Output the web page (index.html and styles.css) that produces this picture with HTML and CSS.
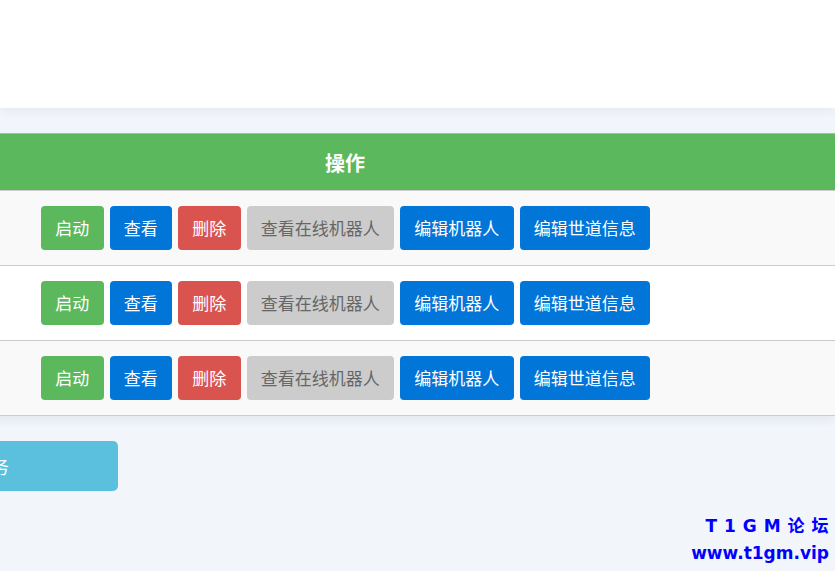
FILE: index.html
```html
<!DOCTYPE html>
<html lang="zh-CN">
<head>
<meta charset="utf-8">
<title>任务列表</title>
<link rel="stylesheet" href="styles.css">
</head>
<body>
<header class="topbar"></header>
<main class="main">
  <div class="table">
    <div class="thead">
      <div class="th th-lead"></div>
      <div class="th th-ops">操作</div>
      <div class="th"></div>
    </div>
    <div class="tr odd">
      <div class="td td-lead"></div>
      <div class="td td-ops">
        <button class="btn btn-green">启动</button>
        <button class="btn btn-blue">查看</button>
        <button class="btn btn-red">删除</button>
        <button class="btn btn-gray">查看在线机器人</button>
        <button class="btn btn-blue">编辑机器人</button>
        <button class="btn btn-blue">编辑世道信息</button>
      </div>
      <div class="td"></div>
    </div>
    <div class="tr even">
      <div class="td td-lead"></div>
      <div class="td td-ops">
        <button class="btn btn-green">启动</button>
        <button class="btn btn-blue">查看</button>
        <button class="btn btn-red">删除</button>
        <button class="btn btn-gray">查看在线机器人</button>
        <button class="btn btn-blue">编辑机器人</button>
        <button class="btn btn-blue">编辑世道信息</button>
      </div>
      <div class="td"></div>
    </div>
    <div class="tr odd">
      <div class="td td-lead"></div>
      <div class="td td-ops">
        <button class="btn btn-green">启动</button>
        <button class="btn btn-blue">查看</button>
        <button class="btn btn-red">删除</button>
        <button class="btn btn-gray">查看在线机器人</button>
        <button class="btn btn-blue">编辑机器人</button>
        <button class="btn btn-blue">编辑世道信息</button>
      </div>
      <div class="td"></div>
    </div>
  </div>
  <div class="actions">
    <button class="btn-add">添加任务</button>
  </div>
</main>
<div class="watermark">
  <div class="wm-line wm-title">T 1 G M 论 坛</div>
  <div class="wm-line">www.t1gm.vip</div>
</div>
</body>
</html>
```

FILE: styles.css
```css
html, body {
  margin: 0;
  padding: 0;
}
body {
  background: #f2f5fa;
  font-family: "Noto Sans CJK SC", "Noto Sans", sans-serif;
  width: 835px;
  height: 571px;
  overflow: hidden;
  position: relative;
}
.topbar {
  height: 108px;
  background: #ffffff;
  box-shadow: 0 2px 10px rgba(40, 60, 100, 0.07);
  position: relative;
  z-index: 1;
}
.main {
  padding-top: 25px;
}
.table {
  margin-left: -300px;
  width: 1135px;
  border-top: 1px solid #b4b4b4;
  box-shadow: 0 4px 10px rgba(40, 60, 100, 0.07);
}
.thead, .tr {
  display: grid;
  grid-template-columns: 329px 632px 1fr;
}
.thead {
  background: #5cb85c;
  height: 56px;
  border-bottom: 1px solid #cccccc;
}
.th {
  display: flex;
  align-items: center;
  justify-content: center;
  color: #ffffff;
  font-size: 20px;
  font-weight: 700;
}
.tr {
  border-bottom: 1px solid #cccccc;
}
.tr.odd { background: #f9f9f9; }
.tr.even { background: #ffffff; }
.td-ops {
  display: flex;
  gap: 6px;
  padding: 15px 12px;
}
.btn {
  height: 44px;
  padding: 0 14.25px;
  border: none;
  border-radius: 4px;
  font-family: "Noto Sans CJK SC", sans-serif;
  font-size: 17px;
  font-weight: 400;
  line-height: 44px;
  color: #ffffff;
  white-space: nowrap;
}
.btn-green { background: #5cb85c; }
.btn-blue { background: #0275d8; }
.btn-red { background: #d9534f; }
.btn-gray { background: #cccccc; color: #666666; }
.actions {
  padding-top: 25px;
  margin-left: -172px;
}
.btn-add {
  width: 290px;
  height: 50px;
  border: none;
  border-radius: 5px;
  background: #5bc0de;
  color: #ffffff;
  font-family: "Noto Sans CJK SC", sans-serif;
  font-size: 18px;
}
.watermark {
  position: absolute;
  right: 6px;
  bottom: 4px;
  text-align: right;
  color: #0000ff;
  font-family: "DejaVu Sans", "Noto Sans CJK SC", sans-serif;
  font-weight: 700;
  font-size: 17px;
  line-height: 27px;
}
.wm-title {
  letter-spacing: 0.5px;
}
```
